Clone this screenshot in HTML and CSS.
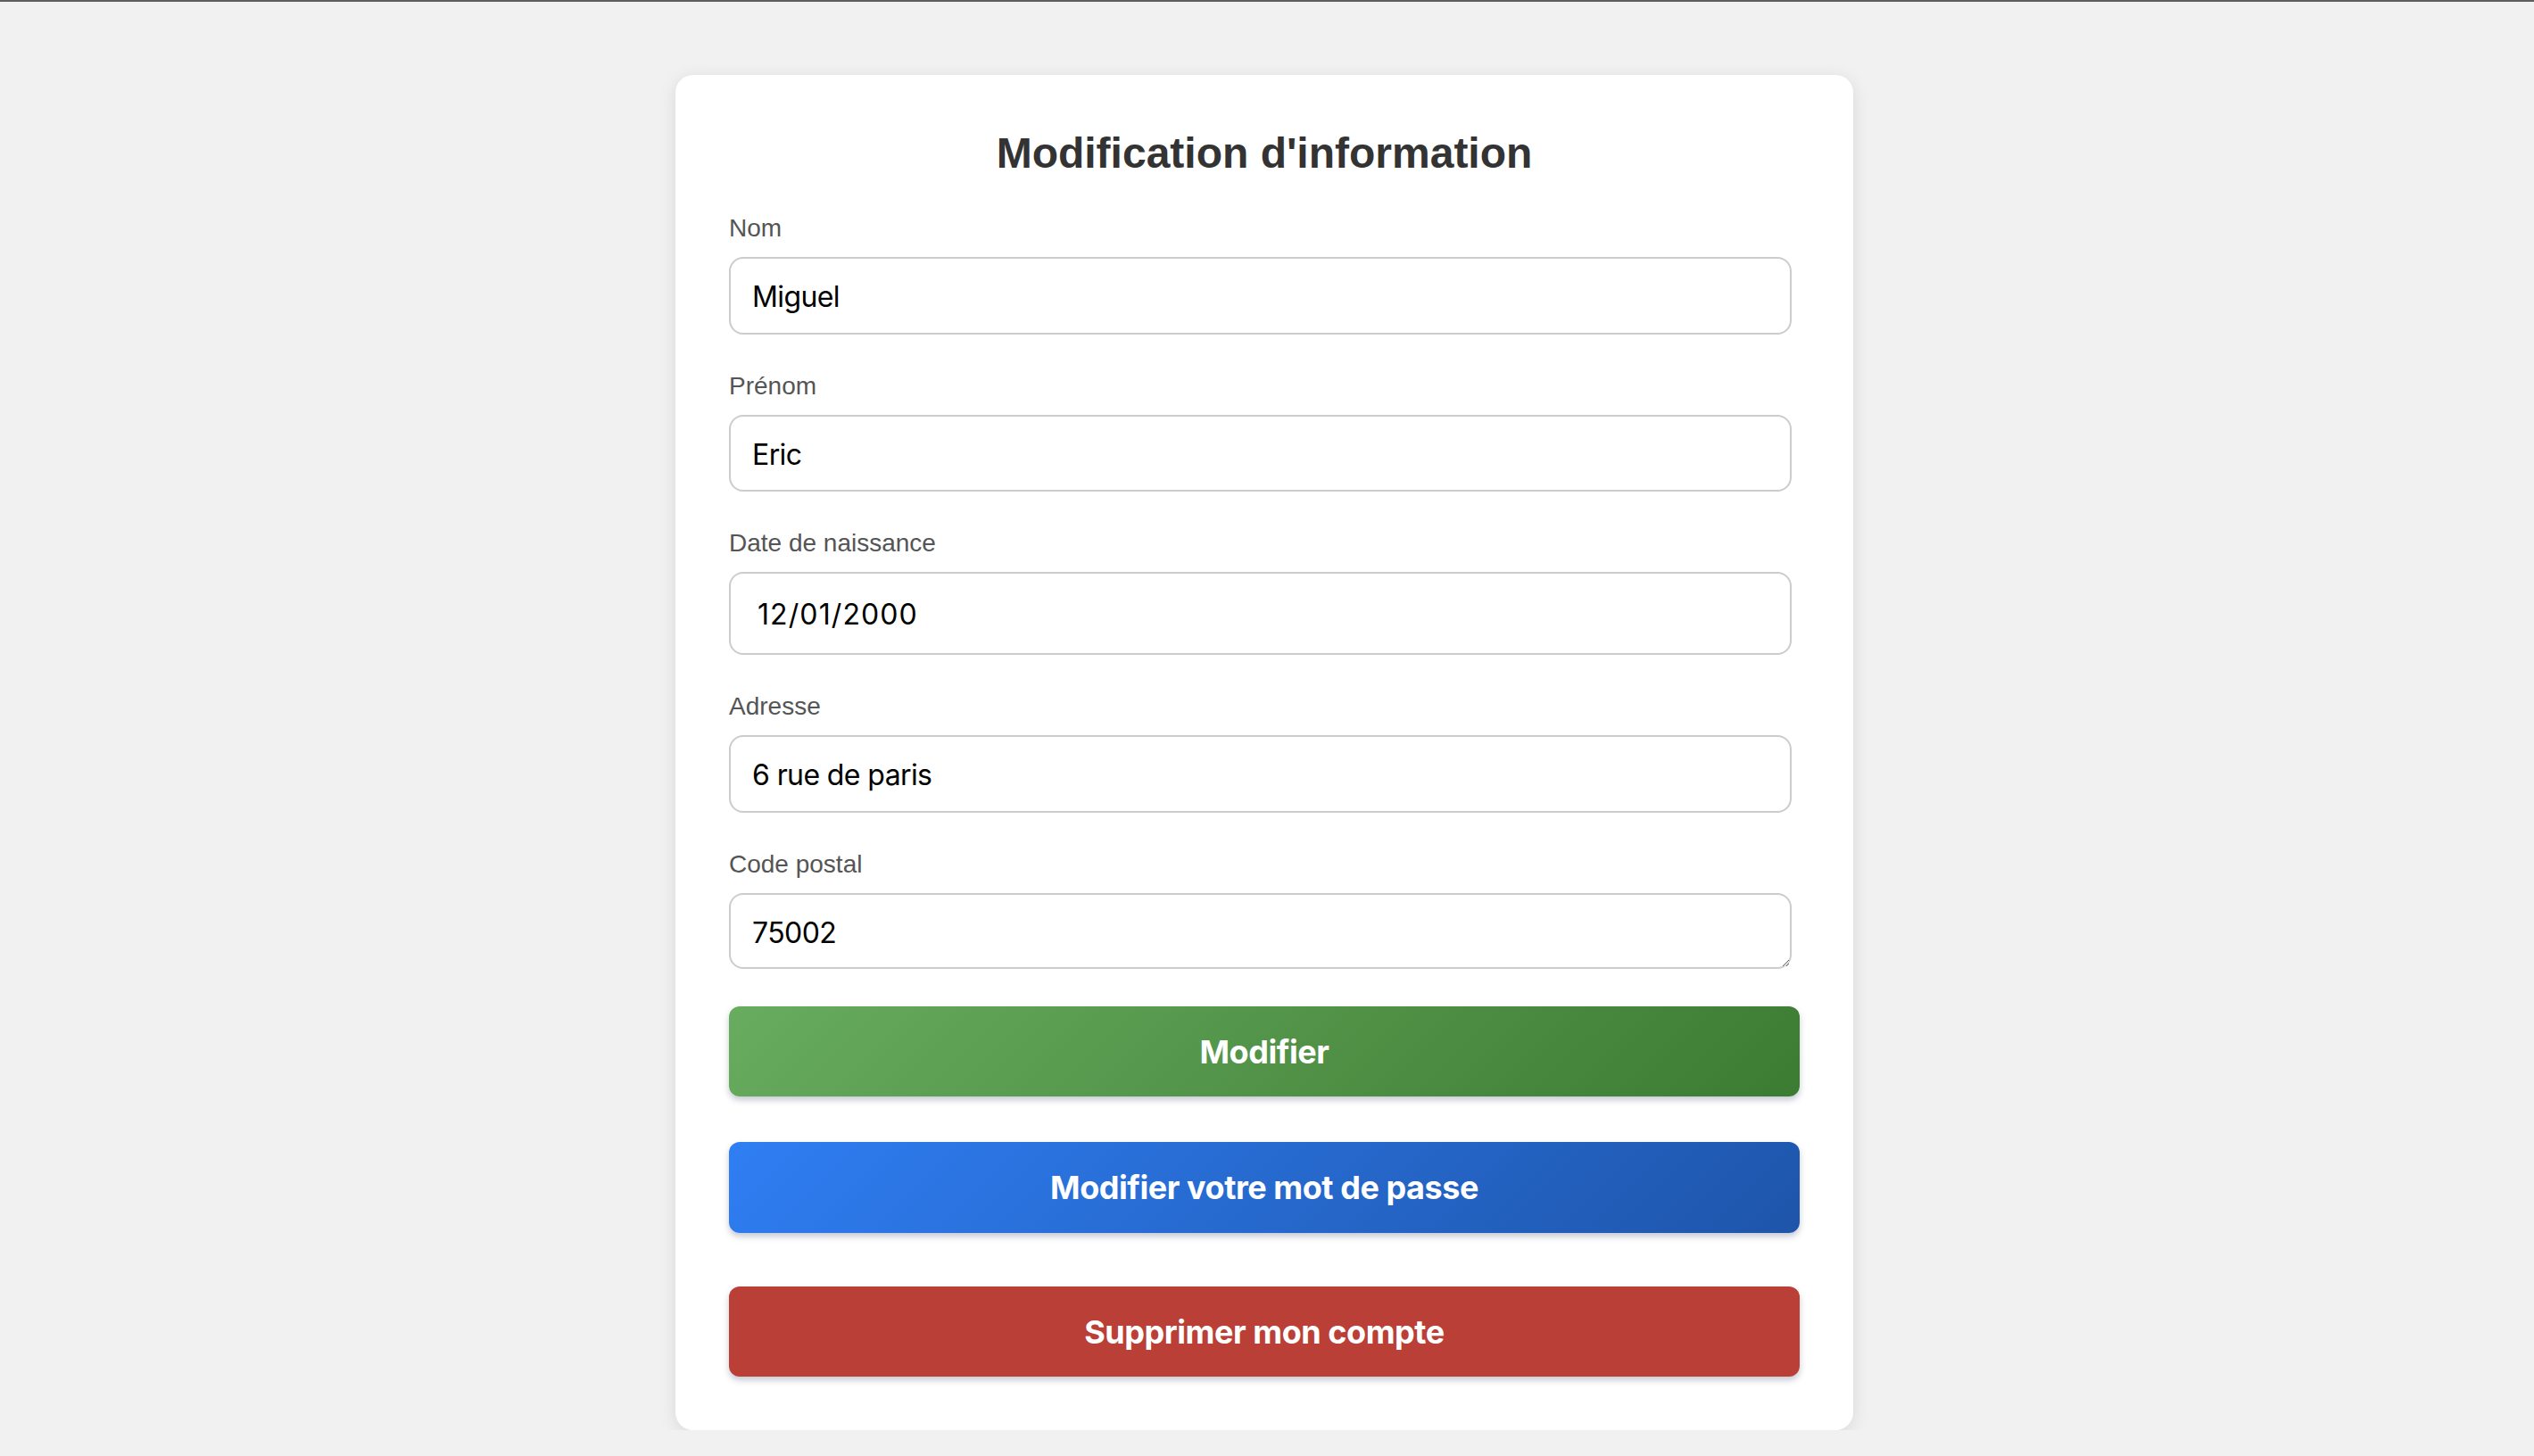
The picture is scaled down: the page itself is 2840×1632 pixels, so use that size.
FILE: index.html
```html
<!DOCTYPE html>
<html lang="fr">
<head>
<meta charset="utf-8">
<title>Modification d'information</title>
<link rel="stylesheet" href="styles.css">
</head>
<body>
<main class="page">
  <section class="card">
    <h2 class="title">Modification d'information</h2>
    <form class="form">
      <div class="field">
        <label class="label" for="nom">Nom</label>
        <input class="input" id="nom" type="text" value="Miguel">
      </div>
      <div class="field">
        <label class="label" for="prenom">Prénom</label>
        <input class="input input-short" id="prenom" type="text" value="Eric">
      </div>
      <div class="field">
        <label class="label" for="date">Date de naissance</label>
        <input class="input input-date" id="date" type="text" value="12/01/2000">
      </div>
      <div class="field">
        <label class="label" for="adresse">Adresse</label>
        <input class="input" id="adresse" type="text" value="6 rue de paris">
      </div>
      <div class="field">
        <label class="label" for="cp">Code postal</label>
        <textarea class="input input-area" id="cp" rows="1">75002</textarea>
      </div>
      <button class="btn btn-green" type="button">Modifier</button>
      <button class="btn btn-blue" type="button">Modifier votre mot de passe</button>
      <button class="btn btn-red" type="button">Supprimer mon compte</button>
    </form>
  </section>
</main>
</body>
</html>
```
FILE: styles.css
```css
* {
  box-sizing: border-box;
}

html {
  background: #f1f1f1;
}

body {
  margin: 0;
  border-top: 2px solid #5f5f5f;
  background: #f1f1f1;
  font-family: "Liberation Sans", Arial, sans-serif;
}

.page {
  display: flex;
  justify-content: center;
  padding: 82px 6px 0 0;
}

.card {
  width: 1320px;
  background: #ffffff;
  border-radius: 20px;
  padding: 60px;
  box-shadow: 0 4px 20px rgba(0, 0, 0, 0.1);
}

.title {
  margin: 0 0 40px;
  font-family: "Liberation Sans", Arial, sans-serif;
  font-weight: bold;
  font-size: 48px;
  line-height: 56px;
  color: #333333;
  text-align: center;
}

.form {
  display: flex;
  flex-direction: column;
}

.field {
  display: flex;
  flex-direction: column;
  margin-bottom: 42px;
}

.label {
  display: block;
  font-size: 28px;
  line-height: 32px;
  color: #555555;
  margin-bottom: 16px;
}

.input {
  display: block;
  width: calc(100% - 9px);
  height: 87px;
  margin: 0;
  padding: 2px 24px 0;
  border: 2px solid #cccccc;
  border-radius: 16px;
  background: #ffffff;
  font-family: Inter, "Noto Sans", sans-serif;
  font-size: 32px;
  letter-spacing: -0.6px;
  color: #000000;
  outline: none;
}

.input-short {
  height: 86px;
}

.input-date {
  height: 93px;
  padding-left: 30px;
  letter-spacing: 1.1px;
}

.input-area {
  height: 85px;
  padding-top: 23px;
  line-height: 39px;
  resize: vertical;
  overflow: hidden;
}

.btn {
  display: block;
  width: 100%;
  height: 101px;
  margin: 0;
  border: none;
  border-radius: 12px;
  font-family: Inter, "Noto Sans", sans-serif;
  font-weight: bold;
  font-size: 36px;
  letter-spacing: -0.45px;
  color: #ffffff;
  box-shadow: 0 4px 7px rgba(50, 60, 100, 0.28);
  cursor: pointer;
}

.btn-green {
  background: linear-gradient(135deg, #68ac5f 0%, #3c7b32 100%);
  margin-bottom: 51px;
}

.btn-blue {
  background: linear-gradient(135deg, #2f7ef3 0%, #1e55aa 100%);
  height: 102px;
  margin-bottom: 60px;
}

.btn-red {
  background: #b93f37;
}
```
